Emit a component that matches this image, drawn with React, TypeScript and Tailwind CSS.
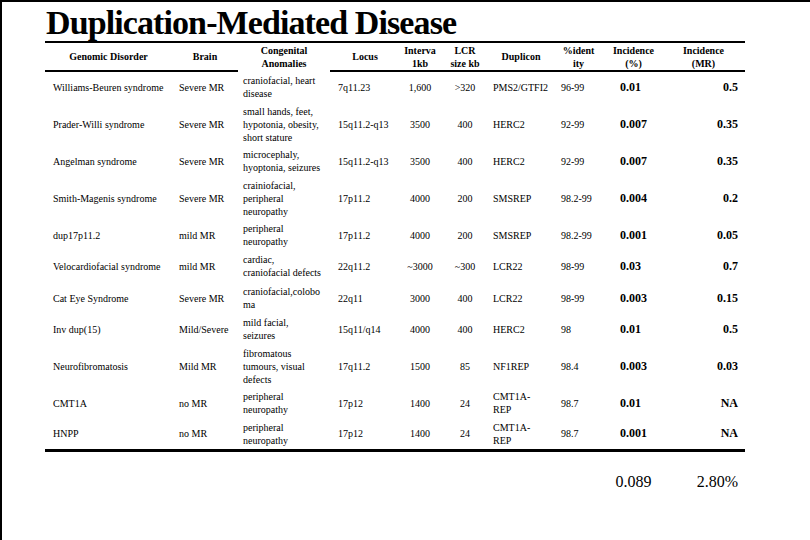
const cols = 'grid grid-cols-[127px_66px_92px_70px_40px_50px_62px_53px_57px_83px]';

type Row = {
  disorder: string;
  brain: string;
  anomalies: string[];
  locus: string;
  interval: string;
  lcr: string;
  duplicon: string[];
  identity: string;
  incPct: string;
  incMr: string;
  h: string;
};

const rows: Row[] = [
  { disorder: 'Williams-Beuren syndrome', brain: 'Severe MR', anomalies: ['craniofacial, heart', 'disease'], locus: '7q11.23', interval: '1,600', lcr: '>320', duplicon: ['PMS2/GTFI2'], identity: '96-99', incPct: '0.01', incMr: '0.5', h: 'h-[30px]' },
  { disorder: 'Prader-Willi syndrome', brain: 'Severe MR', anomalies: ['small hands, feet,', 'hypotonia, obesity,', 'short stature'], locus: '15q11.2-q13', interval: '3500', lcr: '400', duplicon: ['HERC2'], identity: '92-99', incPct: '0.007', incMr: '0.35', h: 'h-[44px]' },
  { disorder: 'Angelman syndrome', brain: 'Severe MR', anomalies: ['microcephaly,', 'hyoptonia, seizures'], locus: '15q11.2-q13', interval: '3500', lcr: '400', duplicon: ['HERC2'], identity: '92-99', incPct: '0.007', incMr: '0.35', h: 'h-[30px]' },
  { disorder: 'Smith-Magenis syndrome', brain: 'Severe MR', anomalies: ['crainiofacial,', 'peripheral', 'neuropathy'], locus: '17p11.2', interval: '4000', lcr: '200', duplicon: ['SMSREP'], identity: '98.2-99', incPct: '0.004', incMr: '0.2', h: 'h-[44px]' },
  { disorder: 'dup17p11.2', brain: 'mild MR', anomalies: ['peripheral', 'neuropathy'], locus: '17p11.2', interval: '4000', lcr: '200', duplicon: ['SMSREP'], identity: '98.2-99', incPct: '0.001', incMr: '0.05', h: 'h-[30px]' },
  { disorder: 'Velocardiofacial syndrome', brain: 'mild MR', anomalies: ['cardiac,', 'craniofacial defects'], locus: '22q11.2', interval: '~3000', lcr: '~300', duplicon: ['LCR22'], identity: '98-99', incPct: '0.03', incMr: '0.7', h: 'h-[32px]' },
  { disorder: 'Cat Eye Syndrome', brain: 'Severe MR', anomalies: ['craniofacial,colobo', 'ma'], locus: '22q11', interval: '3000', lcr: '400', duplicon: ['LCR22'], identity: '98-99', incPct: '0.003', incMr: '0.15', h: 'h-[32px]' },
  { disorder: 'Inv dup(15)', brain: 'Mild/Severe', anomalies: ['mild facial,', 'seizures'], locus: '15q11/q14', interval: '4000', lcr: '400', duplicon: ['HERC2'], identity: '98', incPct: '0.01', incMr: '0.5', h: 'h-[30px]' },
  { disorder: 'Neurofibromatosis', brain: 'Mild MR', anomalies: ['fibromatous', 'tumours, visual', 'defects'], locus: '17q11.2', interval: '1500', lcr: '85', duplicon: ['NF1REP'], identity: '98.4', incPct: '0.003', incMr: '0.03', h: 'h-[44px]' },
  { disorder: 'CMT1A', brain: 'no MR', anomalies: ['peripheral', 'neuropathy'], locus: '17p12', interval: '1400', lcr: '24', duplicon: ['CMT1A-', 'REP'], identity: '98.7', incPct: '0.01', incMr: 'NA', h: 'h-[30px]' },
  { disorder: 'HNPP', brain: 'no MR', anomalies: ['peripheral', 'neuropathy'], locus: '17p12', interval: '1400', lcr: '24', duplicon: ['CMT1A-', 'REP'], identity: '98.7', incPct: '0.001', incMr: 'NA', h: 'h-[31px]' },
];

const Head = ({ lines, gap }: { lines: string[]; gap?: boolean }) => (
  <div
    className={`flex flex-col items-center justify-center h-[29px] border-b-2 ${
      gap ? 'border-transparent' : 'border-black'
    } font-bold text-[10px] leading-[13px]`}
  >
    {lines.map((l) => (
      <span key={l} className="whitespace-nowrap">{l}</span>
    ))}
  </div>
);

export default function App() {
  return (
    <div
      className="w-[810px] h-[540px] bg-white text-black border-l-2 border-t-2 border-black overflow-hidden"
      style={{ fontFamily: '"Liberation Serif", "Times New Roman", serif' }}
    >
      <h1 className="ml-[44px] mt-[4px] h-[35px] text-[34px] leading-[34px] font-bold tracking-[-0.9px] whitespace-nowrap">
        Duplication-Mediated Disease
      </h1>

      <div className="ml-[43px] w-[700px]">
        <div className={`${cols} border-t-2 border-black`}>
          <Head lines={['Genomic Disorder']} />
          <Head lines={['Brain']} />
          <Head lines={['Congenital', 'Anomalies']} gap />
          <Head lines={['Locus']} />
          <Head lines={['Interva', '1kb']} />
          <Head lines={['LCR', 'size kb']} />
          <Head lines={['Duplicon']} />
          <Head lines={['%ident', 'ity']} />
          <Head lines={['Incidence', '(%)']} />
          <Head lines={['Incidence', '(MR)']} />
        </div>

        <div className="border-b-[3px] border-black">
          {rows.map((r) => (
            <div key={r.disorder} className={`${cols} ${r.h} items-center text-[10px] leading-[13px]`}>
              <div className="pl-[8px] whitespace-nowrap">{r.disorder}</div>
              <div className="pl-[7px] whitespace-nowrap">{r.brain}</div>
              <div className="pl-[5px] flex flex-col">
                {r.anomalies.map((a) => (
                  <span key={a} className="whitespace-nowrap">{a}</span>
                ))}
              </div>
              <div className="pl-[8px] whitespace-nowrap">{r.locus}</div>
              <div className="text-center whitespace-nowrap">{r.interval}</div>
              <div className="text-center whitespace-nowrap">{r.lcr}</div>
              <div className="pl-[3px] flex flex-col">
                {r.duplicon.map((d) => (
                  <span key={d} className="whitespace-nowrap">{d}</span>
                ))}
              </div>
              <div className="pl-[9px] whitespace-nowrap">{r.identity}</div>
              <div className="pl-[15px] font-bold text-[12px]">{r.incPct}</div>
              <div className="pr-[7px] text-right font-bold text-[12px]">{r.incMr}</div>
            </div>
          ))}
        </div>

        <div className={`${cols} h-[60px] items-center text-[16px]`}>
          <div className="col-start-9 text-center">0.089</div>
          <div className="pr-[7px] text-right">2.80%</div>
        </div>
      </div>
    </div>
  );
}
